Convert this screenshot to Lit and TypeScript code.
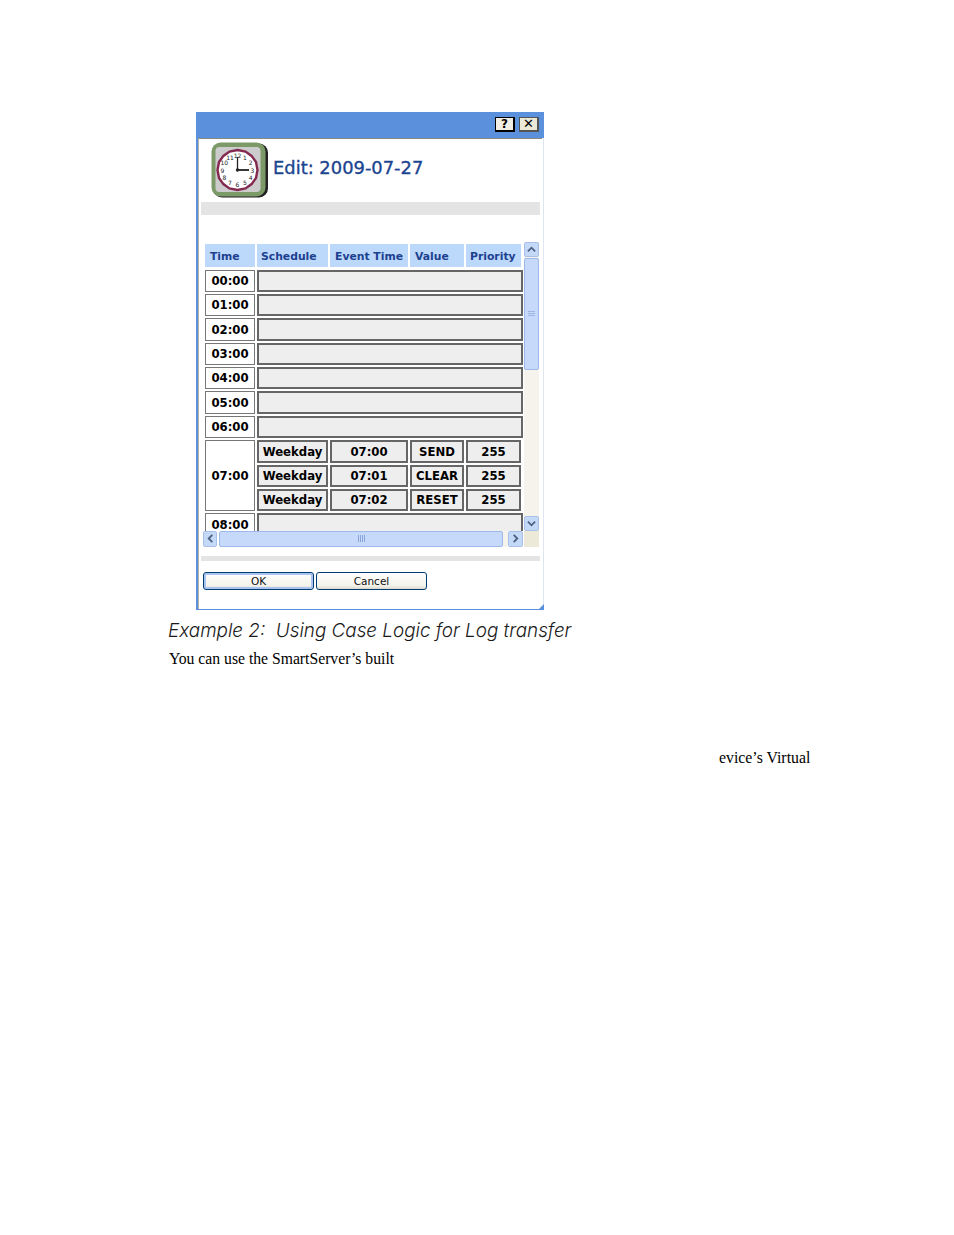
import { LitElement, html, css, svg } from "lit";
import { customElement } from "lit/decorators.js";

const chev = (d: string) => html`<svg class="chev" viewBox="0 0 10 10"><path d="${d}" fill="none" stroke="#4d6185" stroke-width="2"/></svg>`;
const nums = [[12,0,-11.5],[1,6,-10],[2,10.5,-5.5],[3,12,0.5],[4,10.5,6],[5,6,10.5],[6,0,12],[7,-6,10.5],[8,-10.5,6],[9,-12,0.5],[10,-10.5,-5.5],[11,-6,-10]];

@customElement("app-root")
export class AppRoot extends LitElement {
  static styles = css`
    :host { display: block; width: 954px; height: 1235px; background: #fff; overflow: hidden; padding-top: 112px; box-sizing: border-box; }
    .dialog { margin-left: 196px; width: 348px; height: 498px; box-sizing: border-box; display: flex; flex-direction: column; position: relative;
      border-left: 2px solid #5a90dc; border-bottom: 1px solid #5a90dc; border-right: 1px solid #dfe6f2; background: #fff; }
    .corner { position: absolute; right: -1px; bottom: -1px; width: 0; height: 0; border-left: 6px solid transparent; border-bottom: 6px solid #5a90dc; }
    .titlebar { height: 26px; margin-left: -2px; margin-right: -1px; background: #5a90dc; display: flex; justify-content: flex-end; align-items: flex-start; gap: 4px; padding: 5px 5px 0 0; box-sizing: border-box; flex: none; }
    .tb { width: 20px; height: 15px; box-sizing: border-box; background: #ece9d8; border: 1px solid #555; border-right-width: 2px; border-bottom-width: 2px; font: bold 13px/12px "DejaVu Sans", sans-serif; color: #000; text-align: center; }
    .tb.help { border-color: #000; background: #f1efe4; font-size: 12px; }
    .inner { flex: 1; display: flex; flex-direction: column; border-top: 1.5px solid #8a8a80; border-left: 1px solid #b4b4ac; margin-right: 1px; padding-left: 2px; min-height: 0; }
    .head { height: 62.5px; display: flex; flex: none; align-items: flex-start; padding: 2.5px 0 0 10px; gap: 5px; box-sizing: border-box; }
    .clock { width: 57px; height: 56px; display: block; flex: none; }
    .title { font: 17.9px/24px "DejaVu Sans", sans-serif; color: #1b4590; margin-top: 14px; -webkit-text-stroke: 0.35px #1b4590; white-space: nowrap; }
    .band { background: #e4e4e4; margin-right: 2px; flex: none; }
    .band.a { height: 13px; }
    .band.b { height: 5px; margin-top: 9px; }
    .tablewrap { margin-top: 27px; height: 289px; display: flex; flex: none; padding-left: 4px; }
    .clip { width: 318px; height: 289px; overflow: hidden; padding-top: 2px; box-sizing: border-box; flex: none; }
    .grid { display: grid; grid-template-columns: 50px 71px 78px 54px 55px 0; grid-template-rows: 24px; grid-auto-rows: 22.4px; row-gap: 2px; column-gap: 2px; font: bold 11.7px/1 "DejaVu Sans", sans-serif; color: #000; }
    .th { height: 23px; background: #bcd8fb; color: #1c418f; font-size: 10.8px; line-height: 25px; padding-left: 5px; white-space: nowrap; overflow: hidden; }
    .th.tight { padding-left: 4px; }
    .time { border: 1px solid #777; background: #fff; display: flex; align-items: center; justify-content: center; box-sizing: border-box; padding-top: 2px; }
    .cell { border: 2.5px solid #666; background: #eee; display: flex; align-items: center; justify-content: center; box-sizing: border-box; white-space: nowrap; padding-top: 2px; }
    .empty { grid-column: 2 / 7; border-width: 2px; }
    .tall { grid-row: span 3; }
    .vs { width: 15px; margin-left: 1px; background: #f5f3ec; display: flex; flex-direction: column; flex: none; height: 289px; }
    .sbtn { background: #c4d8f8; border: 1px solid #e8f0fc; outline: 1px solid #a8c0e8; outline-offset: -1px; box-sizing: border-box; display: flex; align-items: center; justify-content: center; flex: none; border-radius: 2px; }
    .sbtn.v { height: 15px; width: 15px; }
    .vthumb { height: 112px; margin-top: 1px; background: #c6d9fb; border: 1px solid #9db9ea; border-radius: 2px; box-sizing: border-box; display: flex; align-items: center; justify-content: center; }
    .spacer { flex: 1; }
    .chev { width: 9px; height: 9px; display: block; }
    .gv { width: 7px; height: 5px; border-top: 1px solid #9db5e4; border-bottom: 1px solid #9db5e4; box-sizing: border-box; background: linear-gradient(#9db5e4,#9db5e4) center/100% 1px no-repeat; }
    .hs { height: 16px; display: flex; flex: none; margin-left: 2px; }
    .sbtn.h { width: 14px; height: 16px; }
    .sbtn.r { width: 15px; }
    .hthumb { width: 284px; margin-left: 2px; background: #c6d9fb; border: 1px solid #9db9ea; border-radius: 2px; box-sizing: border-box; display: flex; align-items: center; justify-content: center; flex: none; }
    .gh { width: 7px; height: 7px; background: repeating-linear-gradient(90deg,#8aa5da 0 1px,transparent 1px 2px); }
    .hgap { width: 5px; background: #f5f3ec; flex: none; }
    .hcorner { width: 15px; margin-left: 1px; background: #ece9d8; flex: none; }
    .btns { display: flex; gap: 2px; margin: 11px 0 0 2px; flex: none; }
    .btn { width: 111px; height: 18px; box-sizing: border-box; border: 1px solid #003c74; border-radius: 3px; background: linear-gradient(#fff,#f3f2ea 80%,#dcd8ca); font: 10.5px/16px "DejaVu Sans", sans-serif; color: #111; text-align: center; }
    .btn.ok { box-shadow: inset 0 0 0 2px #a9c4ee; }
    .caption { margin: 9px 0 0 168px; font: italic 300 18.85px/24px "Inter", sans-serif; color: #1a1a1a; white-space: nowrap; width: 500px; }
    .p { margin: 7px 0 0 169px; font: 15.7px/17px "Liberation Serif", serif; color: #000; white-space: nowrap; }
    .p2 { margin: 82px 0 0 719px; font: 15.8px/17px "Liberation Serif", serif; color: #000; white-space: nowrap; }
  `;

  private clock() {
    const cx = 26.5, cy = 28;
    return html`<svg class="clock" viewBox="0 0 57 56">
      <rect x="2" y="1.5" width="55" height="54" rx="9" fill="#222"/>
      <rect x="0.5" y="0.5" width="54" height="54" rx="9" fill="#7c9a68"/>
      <rect x="4.5" y="5" width="45" height="45" rx="4" fill="#cccccc"/>
      <polygon points="26.5,8 34.5,9.6 40.6,13.9 45,20 46.5,28 45,36 40.6,42.1 34.5,46.4 26.5,48 18.5,46.4 12.4,42.1 8,36 6.5,28 8,20 12.4,13.9 18.5,9.6" fill="#fff" stroke="#84294f" stroke-width="2.4"/>
      ${nums.map(([n, x, y]) => svg`<text x="${cx + (x as number) * 1.25}" y="${cy + (y as number) * 1.25 + 2.2}" text-anchor="middle" font-family="DejaVu Sans" font-size="6" fill="#222">${n}</text>`)}
      <path d="M26.5 28V15" stroke="#222" stroke-width="1.3"/>
      <path d="M26.5 28H38" stroke="#222" stroke-width="1.8"/>
      <circle cx="26.5" cy="28" r="1.7" fill="#222"/>
    </svg>`;
  }

  render() {
    const hours = ["00:00", "01:00", "02:00", "03:00", "04:00", "05:00", "06:00"];
    const rows = [["Weekday", "07:00", "SEND", "255"], ["Weekday", "07:01", "CLEAR", "255"], ["Weekday", "07:02", "RESET", "255"]];
    return html`
      <div class="dialog">
        <div class="titlebar"><div class="tb help">?</div><div class="tb">✕</div></div>
        <div class="inner">
          <div class="head">${this.clock()}<div class="title">Edit: 2009-07-27</div></div>
          <div class="band a"></div>
          <div class="tablewrap">
            <div class="clip">
              <div class="grid">
                <div class="th">Time</div><div class="th tight">Schedule</div><div class="th">Event Time</div><div class="th">Value</div><div class="th tight">Priority</div><div></div>
                ${hours.map((h) => html`<div class="time">${h}</div><div class="cell empty"></div>`)}
                <div class="time tall">07:00</div>
                ${rows.map((r) => html`${r.map((c) => html`<div class="cell">${c}</div>`)}<div></div>`)}
                <div class="time">08:00</div><div class="cell empty"></div>
              </div>
            </div>
            <div class="vs">
              <div class="sbtn v">${chev("M1 7L5 3L9 7")}</div>
              <div class="vthumb"><div class="gv"></div></div>
              <div class="spacer"></div>
              <div class="sbtn v">${chev("M1 3L5 7L9 3")}</div>
            </div>
          </div>
          <div class="hs">
            <div class="sbtn h">${chev("M7 1L3 5L7 9")}</div>
            <div class="hthumb"><div class="gh"></div></div>
            <div class="hgap"></div>
            <div class="sbtn h r">${chev("M3 1L7 5L3 9")}</div>
            <div class="hcorner"></div>
          </div>
          <div class="band b"></div>
          <div class="btns"><div class="btn ok">OK</div><div class="btn">Cancel</div></div>
        </div>
        <div class="corner"></div>
      </div>
      <div class="caption">Example 2:&nbsp; Using Case Logic for Log transfer</div>
      <div class="p">You can use the SmartServer’s built</div>
      <div class="p2">evice’s Virtual</div>
    `;
  }
}
